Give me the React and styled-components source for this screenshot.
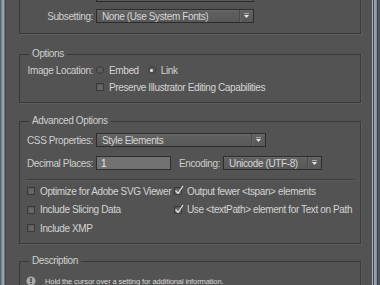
import React from 'react'
import styled, { createGlobalStyle } from 'styled-components'

const GlobalStyle = createGlobalStyle`
  html, body {
    margin: 0;
    padding: 0;
    background: #535353;
    overflow: hidden;
  }
  body {
    font-family: "Liberation Sans", Arial, sans-serif;
    font-size: 10px;
    letter-spacing: -0.38px;
    color: #cfcfcf;
  }
`

const Window = styled.div`
  display: flex;
  width: 380px;
  height: 285px;
  overflow: hidden;
`

const LeftEdge = styled.div`
  flex: none;
  width: 6px;
  background: linear-gradient(to right, #5c5f63 0 1px, #7b8590 1px 2px, #93a0ad 2px 4px, #6f7882 4px 5px, #3f4246 5px 6px);
`

const RightEdge = styled.div`
  flex: none;
  width: 8px;
  background: linear-gradient(to right, #a4b0bc 0 1px, #474c52 1px 2px, #93a0ae 2px 4px, #7f8b98 4px 5px, #41454a 5px 6px, #535353 6px 8px);
`

const Content = styled.div`
  flex: 1;
  display: flex;
  flex-direction: column;
  padding: 0 11px 0 13px;
  margin-top: -29px;
`

const Group = styled.fieldset`
  margin: ${p => p.$mt || 0}px 0 0;
  padding: ${p => p.$pad || '5px 6px 8px'};
  border: 1px solid #393939;
  box-shadow: 1px 1px 0 #5e5e5e;
  min-width: 0;
  display: flex;
  flex-direction: column;
  gap: ${p => p.$gap || '4px'};
`

const Legend = styled.legend`
  padding: 0 3px;
  margin-left: 3px;
  line-height: 12px;
  color: #cfcfcf;
`

const FormRow = styled.div`
  display: grid;
  grid-template-columns: 67px auto auto auto 1fr;
  align-items: center;
  column-gap: 3px;
  height: 14px;
`

const Label = styled.span`
  text-align: right;
  white-space: nowrap;
  justify-self: ${p => (p.$left ? 'start' : 'end')};
  margin-left: ${p => p.$ml || '0'};
`

const SelectBox = styled.div`
  box-sizing: border-box;
  width: ${p => p.$w}px;
  height: 14px;
  display: flex;
  align-items: center;
  border: 1px solid #2c2c2c;
  background: linear-gradient(#616161, #585858);
  box-shadow: inset 0 1px 0 #6a6a6a;
  color: #d6d6d6;
`

const SelectText = styled.span`
  flex: 1;
  padding-left: 5px;
  white-space: nowrap;
  overflow: hidden;
`

const ArrowZone = styled.span`
  flex: none;
  width: 13px;
  height: 100%;
  display: flex;
  align-items: center;
  justify-content: center;
  border-left: 1px solid #4a4a4a;
  box-shadow: inset 1px 0 0 #666;
`

const TextInput = styled.div`
  box-sizing: border-box;
  width: ${p => p.$w}px;
  height: 14px;
  padding-left: 4px;
  display: flex;
  align-items: center;
  border: 1px solid #2e2e2e;
  background: #727272;
  color: #e6e6e6;
`

const Choice = styled.span`
  display: inline-flex;
  align-items: center;
  gap: 5px;
  margin-right: ${p => p.$mr || '0'};
  white-space: nowrap;
  color: #d4d4d4;
`

const Radio = styled.span`
  box-sizing: border-box;
  width: 8px;
  height: 8px;
  border-radius: 50%;
  border: 1px solid #3a3a3a;
  background: #5c5c5c;
  display: inline-flex;
  align-items: center;
  justify-content: center;
  &::after {
    content: '';
    width: 3px;
    height: 3px;
    border-radius: 50%;
    background: ${p => (p.$on ? '#e4e4e4' : 'transparent')};
  }
`

const Box = styled.span`
  position: relative;
  box-sizing: border-box;
  flex: none;
  width: 8px;
  height: 8px;
  border: 1px solid #3a3a3a;
  background: #666;
  box-shadow: inset 1px 1px 0 #5a5a5a;
`

const Tick = styled.svg`
  position: absolute;
  left: -1px;
  top: -3px;
  overflow: visible;
`

const CheckGrid = styled.div`
  display: grid;
  grid-template-columns: 147px 1fr;
  row-gap: 4.5px;
  margin-top: 4px;
  padding-left: 1px;
`

const CheckLine = styled.div`
  display: flex;
  align-items: center;
  height: 14px;
`

const Separator = styled.div`
  height: 1px;
  background: #3f3f3f;
  box-shadow: 0 1px 0 #5c5c5c;
`

const InfoRow = styled.div`
  display: flex;
  align-items: center;
  gap: 9px;
  height: 14px;
  font-size: 7.5px;
  letter-spacing: -0.1px;
  color: #dcdcdc;
`

const Arrow = () => (
  <svg width="7" height="6" viewBox="0 0 7 6">
    <rect x="1" y="0" width="5" height="1" fill="#a8a8a8" />
    <path d="M1 2h5L3.5 5z" fill="#e8e8e8" />
  </svg>
)

const Select = ({ w, children }) => (
  <SelectBox $w={w}>
    <SelectText>{children}</SelectText>
    <ArrowZone><Arrow /></ArrowZone>
  </SelectBox>
)

const Check = ({ on, children }) => (
  <Choice>
    <Box>
      {on && (
        <Tick width="10" height="10" viewBox="0 0 10 10">
          <path d="M1.5 5.5 L4 8.5 L9 1" fill="none" stroke="#e2e2e2" strokeWidth="1.3" />
        </Tick>
      )}
    </Box>
    {children}
  </Choice>
)

const InfoIcon = () => (
  <svg width="10" height="10" viewBox="0 0 10 10">
    <circle cx="5" cy="5" r="4.6" fill="#a9a9a9" />
    <rect x="4.2" y="2" width="1.6" height="4" fill="#4c4c4c" />
    <rect x="4.2" y="6.8" width="1.6" height="1.4" fill="#4c4c4c" />
  </svg>
)

export default function App() {
  return (
    <Window>
      <GlobalStyle />
      <LeftEdge />
      <Content>
        {/* fonts group, scrolled so only its lower part shows */}
        <Group $pad="5px 6px 10px" $gap="7px">
          <Legend>Fonts</Legend>
          <FormRow>
            <span />
            <SelectBox $w={158} />
          </FormRow>
          <FormRow>
            <Label>Subsetting:</Label>
            <Select w={158}>None (Use System Fonts)</Select>
          </FormRow>
        </Group>

        <Group $mt={14} $pad="3px 6px 8px" $gap="3px">
          <Legend>Options</Legend>
          <FormRow>
            <Label>Image Location:</Label>
            <Choice $mr="6px"><Radio />Embed</Choice>
            <Choice><Radio $on />Link</Choice>
          </FormRow>
          <FormRow>
            <span />
            <Check>Preserve Illustrator Editing Capabilities</Check>
          </FormRow>
        </Group>

        <Group $mt={12} $pad="6px 6px 8px" $gap="9px">
          <Legend>Advanced Options</Legend>
          <FormRow>
            <Label>CSS Properties:</Label>
            <Select w={170}>Style Elements</Select>
          </FormRow>
          <FormRow>
            <Label>Decimal Places:</Label>
            <TextInput $w={75}>1</TextInput>
            <Label $left $ml="5px">Encoding:</Label>
            <Select w={99}>Unicode (UTF-8)</Select>
          </FormRow>
          <div>
            <Separator />
            <CheckGrid>
              <CheckLine><Check>Optimize for Adobe SVG Viewer</Check></CheckLine>
              <CheckLine><Check on>Output fewer &lt;tspan&gt; elements</Check></CheckLine>
              <CheckLine><Check>Include Slicing Data</Check></CheckLine>
              <CheckLine><Check on>Use &lt;textPath&gt; element for Text on Path</Check></CheckLine>
              <CheckLine><Check>Include XMP</Check></CheckLine>
            </CheckGrid>
          </div>
        </Group>

        <Group $mt={11} $pad="7px 6px 8px">
          <Legend>Description</Legend>
          <InfoRow>
            <InfoIcon />
            Hold the cursor over a setting for additional information.
          </InfoRow>
        </Group>
      </Content>
      <RightEdge />
    </Window>
  )
}
